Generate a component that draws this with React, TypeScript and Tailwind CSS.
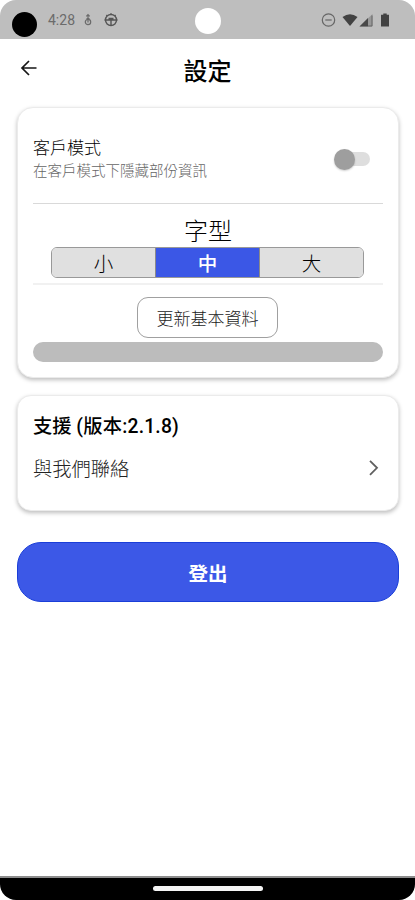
import { useState } from "react";
import clsx from "clsx";

const FONT_SIZES = ["小", "中", "大"];

function StatusBar() {
  return (
    <div className="relative flex h-[39px] shrink-0 items-start justify-between rounded-t-[16px] bg-[#bebebe] pl-3 pr-[27px]">
      <div className="flex items-center pt-[12px]">
        <span className="size-[25px] rounded-full bg-black" />
        <div className="-mt-[9px] flex items-center">
          <span className="ml-[11px] w-[28px] text-[14px] leading-[16px] text-[#6b6b6b]">4:28</span>
          <svg className="ml-[7px]" width="10" height="14" viewBox="0 0 10 14" fill="none" stroke="#6b6b6b" strokeWidth="1.2">
            <circle cx="5" cy="9" r="2.7" />
            <path d="M5 1.5v8M3.3 3.4 5 1.7l1.7 1.7M3.5 5.5h3" />
          </svg>
          <svg className="ml-[10px]" width="16" height="16" viewBox="0 0 16 16" fill="none" stroke="#555" strokeWidth="1.4">
            <circle cx="8" cy="8" r="5.5" />
            <path d="M1.5 8h13M8 8v5M5.5 6.500h5" />
            <path d="M8 1.2v1.3M3.4 3l.8.8M12.6 3l-.8.8" />
          </svg>
        </div>
      </div>
      <span className="absolute left-[195px] top-[8px] size-[26px] rounded-full bg-white" />
      <div className="flex items-center pt-[12px]">
        <svg width="16" height="16" viewBox="0 0 16 16" fill="none" stroke="#666" strokeWidth="1.2">
          <circle cx="8.5" cy="8" r="6.2" />
          <path d="M5.3 8h6.4" />
        </svg>
        <svg className="ml-[5px]" width="17" height="16" viewBox="0 0 17 16" fill="#424242">
          <path d="M1.5 5Q9-.6 16.5 5L9 14Z" />
        </svg>
        <svg className="ml-px" width="14" height="16" viewBox="0 0 14 16">
          <path d="M.5 14.5 13.5 2v12.5Z" fill="#989898" />
          <path d="M.5 14.5 9 6v8.5Z" fill="#484848" />
          <path d="M13 3.5v10.500H9" fill="none" stroke="#666" />
        </svg>
        <svg className="-mr-px ml-[8px]" width="8" height="16" viewBox="0 0 8 16" fill="#424242">
          <path d="M2.3 1.5h3.4v1.3H8v11.7H0V2.8h2.3Z" />
        </svg>
      </div>
    </div>
  );
}

function Header() {
  return (
    <header className="grid h-[61px] grid-cols-[1fr_auto_1fr] items-center px-[20px]">
      <button aria-label="返回" className="-mt-[3px]">
        <svg width="18" height="18" viewBox="0 0 18 18" fill="none" stroke="#161616" strokeWidth="1.7">
          <path d="M16.5 9H2.5M9 2 2 9l7 7" />
        </svg>
      </button>
      <h1 className="pt-[4px] text-[24px] font-medium leading-[36px] text-black">設定</h1>
    </header>
  );
}

function CustomerMode() {
  const [enabled, setEnabled] = useState(false);

  return (
    <div className="flex h-[96px] items-center justify-between border-b border-[#d9d9d9] pt-[7px]">
      <div>
        <p className="text-[17px] font-light leading-[24px] text-black">客戶模式</p>
        <p className="pt-px text-[14.5px] font-light leading-[22px] text-[#666]">在客戶模式下隱藏部份資訊</p>
      </div>
      <button
        role="switch"
        aria-checked={enabled}
        onClick={() => setEnabled(!enabled)}
        className={clsx(
          "mr-[13px] flex h-[14px] w-[34px] items-center rounded-full bg-[#dedede]",
          enabled ? "justify-end" : "justify-start"
        )}
      >
        <span className="-ml-[2px] size-[21px] shrink-0 rounded-full bg-[#9e9e9e] shadow-[0_1px_2px_rgba(0,0,0,0.2)]" />
      </button>
    </div>
  );
}

function FontSizePicker() {
  const [selected, setSelected] = useState("中");

  return (
    <div className="flex h-[81px] flex-col items-center border-b-2 border-[#f1f1f1] pt-[8px]">
      <p className="h-[35px] pt-[3px] text-[24px] font-light leading-[35px] text-black">字型</p>
      <div className="mr-px flex h-[31px] w-[313px] shrink-0 divide-x divide-[#8a8a8a] overflow-hidden rounded-[6px] border border-[#999]">
        {FONT_SIZES.map((size) => (
          <button
            key={size}
            onClick={() => setSelected(size)}
            className={clsx(
              "flex-1 pt-[2px] text-[19.5px] leading-[29px]",
              size === selected ? "bg-[#3b57e6] font-medium text-white" : "bg-[#e0e0e0] font-light text-black"
            )}
          >
            {size}
          </button>
        ))}
      </div>
    </div>
  );
}

export default function App() {
  return (
    <div className="flex h-[900px] w-[415px] flex-col bg-white font-[Roboto,'Noto_Sans_CJK_TC',sans-serif]">
      <StatusBar />
      <Header />

      <main className="flex flex-1 flex-col pl-[17px] pr-[16px] pt-[7px]">
        <section className="h-[271px] rounded-[16px] border border-[#ebebeb] bg-white px-[15px] shadow-[0_2px_4px_rgba(0,0,0,0.26)]">
          <CustomerMode />
          <FontSizePicker />
          <div className="flex flex-col items-center pt-[12px]">
            <button className="mr-px h-[41px] w-[141px] rounded-[11px] border border-[#a0a0a0] pt-[3px] text-[17px] font-light leading-[36px] text-[#1c1c1c]">
              更新基本資料
            </button>
            <div className="mt-[4px] h-[20px] w-full rounded-full bg-[#bcbcbc]" />
          </div>
        </section>

        <section className="mt-[17px] h-[116px] rounded-[14px] border border-[#ebebeb] bg-white px-[15px] pt-[17px] shadow-[0_2px_4px_rgba(0,0,0,0.26)]">
          <h2 className="text-[19.3px] font-medium leading-[28px] text-black">
            支援 <span className="tracking-[0.2px]">(版本:2.1.8)</span>
          </h2>
          <button className="mt-[13px] flex w-full items-center justify-between">
            <span className="pt-px text-[19.3px] font-light leading-[30px] text-[#222]">與我們聯絡</span>
            <svg className="-mt-[4px] mr-[3px]" width="12" height="18" viewBox="0 0 12 18" fill="none" stroke="#606060" strokeWidth="1.8">
              <path d="m2 1.8 7 7-7 7" />
            </svg>
          </button>
        </section>

        <button className="mt-[31px] h-[60px] rounded-[24px] border border-[#1a3ed8] bg-[#3c58e7] pt-[5px] text-[19.5px] font-bold leading-[53px] text-white">
          登出
        </button>
      </main>

      <footer className="flex h-[24px] shrink-0 justify-center rounded-b-[16px] border-t-2 border-[#8c8c8c] bg-black pt-[8px]">
        <span className="h-[5px] w-[110px] rounded-full bg-[#f5f5f5]" />
      </footer>
    </div>
  );
}
